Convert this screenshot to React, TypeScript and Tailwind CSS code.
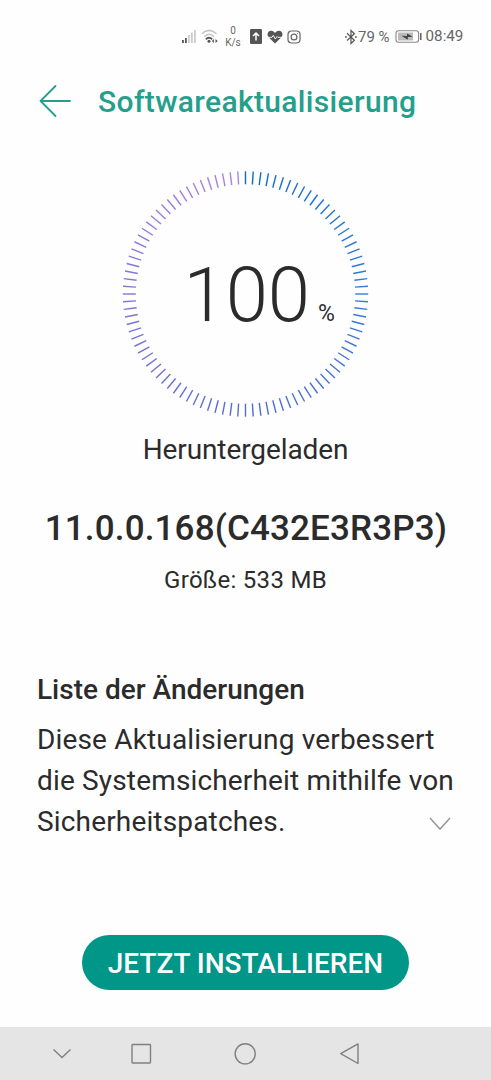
const TICK_COUNT = 100;

// colour stops around the dial, clockwise from the top
const STOPS: [number, number[]][] = [
  [0, [12, 108, 204]],
  [0.25, [56, 122, 216]],
  [0.5, [84, 108, 208]],
  [0.75, [132, 116, 212]],
  [1, [172, 134, 220]],
];

function tickColor(t: number) {
  const i = Math.min(Math.floor(t * 4), 3);
  const [start, from] = STOPS[i];
  const to = STOPS[i + 1][1];
  const k = (t - start) * 4;
  return `rgb(${from.map((c, n) => Math.round(c + (to[n] - c) * k)).join(',')})`;
}

function StatusBar() {
  return (
    <div className="flex h-[73px] items-center pl-[181px] text-[#666]">
      <svg className="h-[15px] w-[15px]" viewBox="0 0 15 15">
        <rect x="1" y="11" width="1.8" height="3" fill="#555" />
        <rect x="4" y="9" width="1.8" height="5" fill="#555" />
        <rect x="7" y="6" width="1.8" height="8" fill="#ccc" />
        <rect x="10" y="3.5" width="1.8" height="10.5" fill="#ccc" />
        <rect x="13" y="1" width="1.8" height="13" fill="#ccc" />
      </svg>
      <svg className="ml-[5px] h-[15px] w-[18px]" viewBox="0 0 18 15" fill="none" strokeWidth="1.5">
        <path d="M.8 4.800Q8 -2 15.500 4.800" stroke="#c4c4c4" />
        <path d="M3.300 7.600Q8 3 13 7.600" stroke="#c4c4c4" />
        <path d="M4.800 10.200Q8 7.400 11.200 10.200" stroke="#555" strokeWidth="1.800" />
        <circle cx="8" cy="12.300" r="1.500" fill="#555" />
        <path d="M12.900 10v4l-2-2zM14.500 10v4l2.200-2z" fill="#555" />
      </svg>
      <div className="ml-[5px] w-[18px] text-center text-[10px] leading-[12px]">
        <div>0</div>
        <div>K/s</div>
      </div>
      <svg className="ml-[8px] h-[15px] w-[12px]" viewBox="0 0 12 15">
        <rect width="12" height="15" rx="1.200" fill="#555" />
        <path d="M6 11.500V4M3 7l3-3 3 3" stroke="#fff" strokeWidth="1.500" fill="none" />
      </svg>
      <svg className="ml-[5px] h-[14px] w-[16px]" viewBox="0 0 16 14">
        <path d="M8 13.500L1.600 7.200C-.8 4.200 1 .7 4.200.7 6 .7 7.300 1.800 8 2.900 8.700 1.800 10 .7 11.800.7 15 .7 16.800 4.200 14.400 7.200Z" fill="#555" />
        <path d="M0 7.300h5l1.300-2 2 3.700 1.700-2.500.8.800H16" stroke="#fff" strokeWidth=".9" fill="none" />
      </svg>
      <svg className="ml-[4px] h-[14px] w-[14px]" viewBox="0 0 14 14" fill="none" stroke="#666" strokeWidth="1.200">
        <rect x="1" y="1" width="12" height="12" rx="3.500" />
        <circle cx="7" cy="7" r="2.900" />
        <circle cx="10.500" cy="3.500" r=".5" fill="#555" stroke="none" />
      </svg>
      <svg className="ml-[43px] h-[16px] w-[13px]" viewBox="0 0 13 16" fill="none" stroke="#555" strokeWidth="1.200">
        <path d="M3 4.200l7.400 7L7 14.500v-13l3.400 3.200-7.400 6.800" />
        <path d="M1 8h1.800M11 8h1.800" strokeWidth="1.400" />
      </svg>
      <span className="ml-[1px] pt-px text-[15px] leading-none whitespace-nowrap">79 %</span>
      <svg className="ml-[5px] h-[13px] w-[27px]" viewBox="0 0 27 13">
        <rect x="1" y=".7" width="22.600" height="11.600" rx="2.500" fill="#fff" stroke="#888" strokeWidth="1.100" />
        <rect x="3" y="2.500" width="15" height="8" fill="#bbb" />
        <path d="M6.500 5.800l5.500.3V3.500l5.800 3.300-5 .3v2.700z" fill="#444" />
        <path d="M25.800 3v7" stroke="#555" strokeWidth="1.400" />
      </svg>
      <span className="ml-[4px] pt-px text-[15.200px] leading-none">08:49</span>
    </div>
  );
}

function ProgressDial() {
  return (
    <div className="relative mx-auto h-[248px] w-[248px]">
      <svg className="h-full w-full" viewBox="0 0 248 248">
        {Array.from({ length: TICK_COUNT }, (_, i) => (
          <line
            key={i}
            x1="123.500"
            x2="123.500"
            y1="1.300"
            y2="14.300"
            stroke={tickColor(i / TICK_COUNT)}
            strokeWidth="1.400"
            transform={`rotate(${(i * 360) / TICK_COUNT} 123.500 124)`}
          />
        ))}
      </svg>
      <div className="absolute inset-0 flex items-baseline pt-[80px] pl-[62px] leading-[90px]">
        <span className="text-[76px] font-light">100</span>
        <span className="ml-[8px] text-[23px]">%</span>
      </div>
    </div>
  );
}

function NavBar() {
  return (
    <nav className="flex h-[53px] items-center bg-[#e5e5e5] pl-[51px]">
      <svg className="h-[22px] w-[22px]" viewBox="0 0 22 22" fill="none" stroke="#808080" strokeWidth="1.400">
        <path d="M2.500 6.500l8.500 8 8.500-8" />
      </svg>
      <svg className="ml-[57px] h-[22px] w-[22px]" viewBox="0 0 22 22" fill="none" stroke="#808080" strokeWidth="1.400">
        <rect x="2" y="1.500" width="18.500" height="18.500" rx=".7" />
      </svg>
      <svg className="ml-[82px] h-[22px] w-[22px]" viewBox="0 0 22 22" fill="none" stroke="#808080" strokeWidth="1.400">
        <circle cx="11.200" cy="10.800" r="10.100" />
      </svg>
      <svg className="ml-[83px] h-[22px] w-[22px]" viewBox="0 0 22 22" fill="none" stroke="#808080" strokeWidth="1.400" strokeLinejoin="round">
        <path d="M1.700 10.700L19 .9v19.600z" />
      </svg>
    </nav>
  );
}

export default function App() {
  return (
    <div className="flex h-[1080px] w-[491px] flex-col overflow-hidden bg-[#fefefe] font-['Roboto',sans-serif] text-[#2b2b2b]">
      <StatusBar />
      <header className="flex h-[56px] items-center pl-[39px] text-[#259f8c]">
        <svg className="h-[32px] w-[32px]" viewBox="0 0 32 32" fill="none" stroke="currentColor" strokeWidth="1.800" strokeLinecap="round" strokeLinejoin="round">
          <path d="M16.500 1L1.500 16l15 15M1.500 16H31" />
        </svg>
        <h1 className="mt-[2px] ml-[27px] text-[30px] leading-[36px] font-medium tracking-[0.35px] whitespace-nowrap">Softwareaktualisierung</h1>
      </header>

      <main className="flex flex-1 flex-col pt-[41px]">
        <ProgressDial />
        <p className="mt-[15px] text-center text-[28px] leading-[34px] tracking-[-0.1px]">Heruntergeladen</p>
        <h2 className="mt-[41px] pl-px text-center text-[35px] leading-[42px] font-medium tracking-[0.15px] whitespace-nowrap">11.0.0.168(C432E3R3P3)</h2>
        <p className="mt-[15px] text-center text-[24px] leading-[30px] tracking-[0.3px]">Größe: 533 MB</p>

        <section className="mt-[78px] pl-[37px]">
          <h3 className="text-[28px] leading-[34px] font-medium">Liste der Änderungen</h3>
          <div className="mt-[12px] flex items-end">
            <p className="w-[392px] text-[28px] leading-[41px] tracking-[0.16px] whitespace-nowrap">
              Diese Aktualisierung verbessert
              <br />
              die Systemsicherheit mithilfe von
              <br />
              Sicherheitspatches.
            </p>
            <svg className="mb-[11px] h-[14px] w-[22px]" viewBox="0 0 22 14" fill="none" stroke="#999" strokeWidth="1.600">
              <path d="M1 1l10 11L21 1" />
            </svg>
          </div>
        </section>

        <button className="mx-auto mt-auto mb-[37px] h-[55px] w-[327px] rounded-full bg-[#009688] pt-[2px] text-[28px] font-medium text-white">
          JETZT INSTALLIEREN
        </button>
      </main>
      <NavBar />
    </div>
  );
}
